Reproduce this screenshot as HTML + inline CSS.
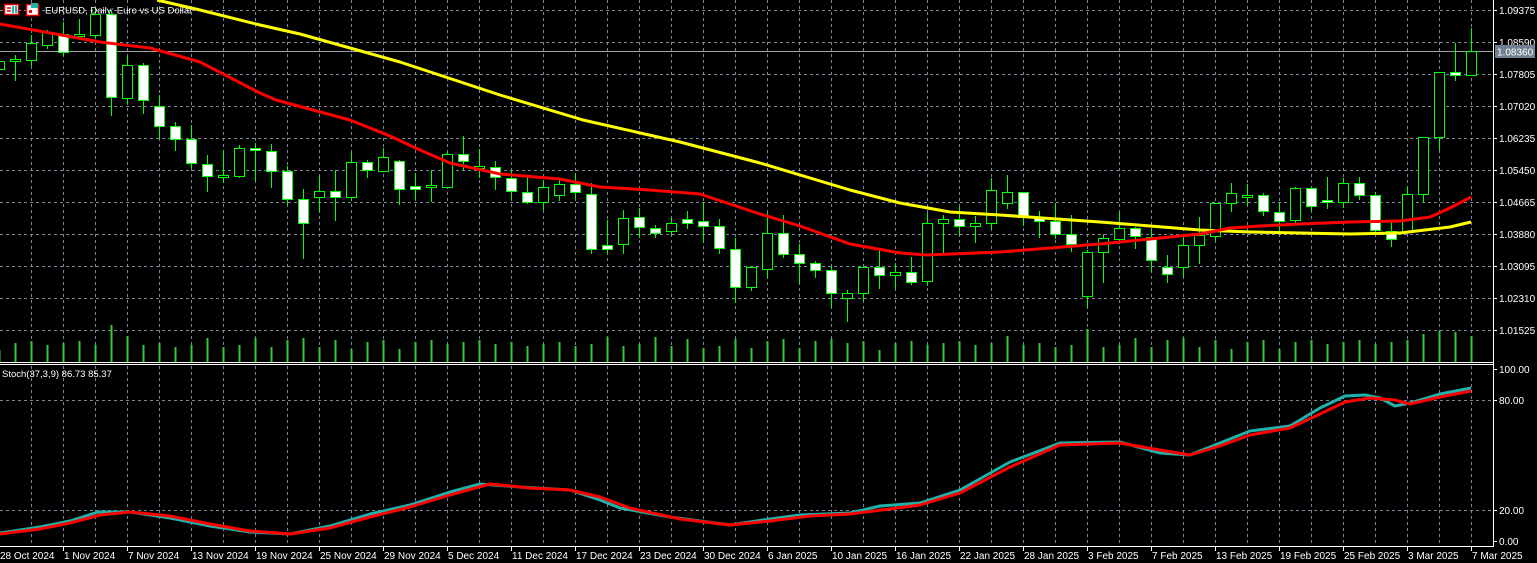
<!DOCTYPE html>
<html><head><meta charset="utf-8"><style>
html,body{margin:0;padding:0;background:#000;width:1537px;height:563px;overflow:hidden}
svg{display:block}
text{font-family:"Liberation Sans",sans-serif;font-size:10px;fill:#fff}
text.t{font-size:9.5px}
</style></head><body>
<svg id="s" width="1537" height="563" viewBox="0 0 1537 563" xmlns="http://www.w3.org/2000/svg">
<rect width="1537" height="563" fill="#000"/>
<g id="grid"></g>
<g id="vol"></g>
<line x1="0" y1="51.5" x2="1493" y2="51.5" stroke="#a0a0a0" stroke-width="1"/>
<g id="candles"></g>
<g id="lines"></g>
<line x1="0" y1="362.5" x2="1494" y2="362.5" stroke="#fff"/>
<line x1="0" y1="364.5" x2="1494" y2="364.5" stroke="#fff"/>
<line x1="1493.5" y1="0" x2="1493.5" y2="547" stroke="#fff"/>
<line x1="0" y1="546.5" x2="1494" y2="546.5" stroke="#fff"/>
<g id="labels"></g>
<rect x="1495" y="45" width="40" height="13" fill="#708090"/>
<text x="1497" y="55.5">1.08360</text>
<g>
<rect x="4.5" y="4.5" width="14" height="10" fill="#fff" stroke="#e00" stroke-width="1.5"/>
<line x1="7" y1="8" x2="11" y2="8" stroke="#e00" stroke-width="1.5"/><line x1="7" y1="11" x2="11" y2="11" stroke="#e00" stroke-width="1.5"/>
<line x1="13" y1="6" x2="13" y2="13" stroke="#20b2aa" stroke-width="2"/><line x1="16" y1="6" x2="16" y2="13" stroke="#20b2aa" stroke-width="2"/>
<rect x="26.5" y="4.5" width="12" height="11" fill="#fff" stroke="#e00" stroke-width="1.5"/>
<rect x="31" y="3" width="7" height="5" fill="#20b2aa"/>
<rect x="29" y="10" width="3" height="3" fill="#e00"/>
</g>
<text class="t" x="45" y="13.5">EURUSD, Daily:  Euro vs US Dollar</text>
<text class="t" x="2" y="377">Stoch(37,3,9) 86.73 85.37</text>
</svg>
<script>
var NS="http://www.w3.org/2000/svg";
function el(p,t,a,txt){var e=document.createElementNS(NS,t);for(var k in a)e.setAttribute(k,a[k]);if(txt!=null)e.textContent=txt;document.getElementById(p).appendChild(e);return e;}
for(var x=31;x<1493;x+=32){el("grid","line",{x1:x+.5,y1:0,x2:x+.5,y2:546,stroke:"#778899","stroke-dasharray":"3,3"});}
for(var y=10;y<=330;y+=32){el("grid","line",{x1:0,y1:y+.5,x2:1493,y2:y+.5,stroke:"#778899","stroke-dasharray":"3,3"});}
[400,510].forEach(function(y){el("grid","line",{x1:0,y1:y+.5,x2:1493,y2:y+.5,stroke:"#778899","stroke-dasharray":"3,3"});});
var C=[[-1,61,69,55,72,0],[15,59,61,55,80,0],[31,43,60,35,65,0],[47,32,45,30,48,0],[63,34,52,22,55,1],[79,34,35,19,38,0],[95,14,35,8,37,0],[111,14,97,10,115,1],[127,65,98,56,103,0],[143,65,100,63,113,1],[159,106,126,95,138,1],[175,126,139,122,150,1],[191,139,163,125,167,1],[207,164,176,155,191,1],[223,175,177,150,182,0],[239,148,176,145,177,0],[255,148,150,143,180,1],
[271,151,171,144,187,1],[287,171,199,166,204,1],[303,199,223,189,258,1],[319,191,197,176,211,0],[335,191,197,170,220,1],[351,162,197,153,200,0],[367,162,170,160,177,1],[383,157,171,148,171,0],[399,161,189,160,204,1],[415,186,189,173,199,1],[431,185,186,170,201,0],[447,154,187,152,187,0],[463,154,161,136,170,1],[479,166,167,149,177,0],[495,167,177,161,189,1],
[511,178,191,170,198,1],[527,192,202,177,203,1],[543,187,202,180,209,0],[559,184,195,178,200,0],[575,184,192,173,198,1],[591,194,249,183,253,1],[607,245,249,220,253,1],[623,218,244,210,253,0],[639,217,227,208,237,1],[655,228,233,225,237,1],[671,223,231,217,234,0],[687,219,223,211,228,1],[703,221,226,202,242,1],[719,226,248,219,253,1],[735,249,287,238,302,1],[751,267,287,266,290,0],
[767,233,269,213,277,0],[783,233,254,215,257,1],[799,254,263,244,283,1],[815,263,270,261,277,1],[831,270,293,266,307,1],[847,293,298,290,321,0],[863,267,293,267,300,0],[879,267,275,250,288,1],[895,272,275,263,288,0],[911,272,282,257,284,1],[927,223,281,213,285,0],[943,219,223,215,253,0],[959,219,226,207,234,1],[975,223,226,216,242,0],[991,190,223,178,228,0],[1007,192,203,175,208,0],
[1023,192,217,192,225,1],[1039,217,221,211,237,1],[1055,221,234,203,238,1],[1071,234,244,215,251,1],[1087,252,296,250,307,0],[1103,238,252,234,282,0],[1119,228,239,212,243,0],[1135,228,236,227,248,1],[1151,237,260,230,271,1],[1167,267,274,255,282,1],[1183,245,267,237,276,0],[1199,235,245,217,263,0],[1215,203,236,203,240,0],[1231,193,203,183,211,0],[1247,195,195,184,205,0],
[1263,195,211,193,215,1],[1279,212,221,203,230,1],[1295,188,220,187,223,0],[1311,188,206,187,210,1],[1327,200,202,177,208,1],[1343,183,202,178,207,0],[1359,183,195,177,199,1],[1375,195,230,192,232,1],[1391,231,239,222,246,1],[1407,194,232,186,232,0],[1423,137,194,137,201,0],[1439,72,137,72,149,0],[1455,72,75,43,80,1],[1471,51,75,28,75,0]];
var G="#00ff00";
C.forEach(function(c,i){
 el("candles","line",{x1:c[0]+.5,y1:c[3],x2:c[0]+.5,y2:c[4]+1,stroke:G});
 var h=Math.max(c[2]-c[1],2);
 el("candles","rect",{x:c[0]-4.5,y:c[1]+.5,width:10,height:h,fill:c[5]?"#fff":"#000",stroke:G});
 var vh=12+((i*37)%11)+((i*13)%5);
 if(c[0]==111)vh=37;if(c[0]==1087)vh=33;if(c[0]>=1407)vh=[22,28,31,30,26][(c[0]-1407)/16]||26;
 el("vol","line",{x1:c[0]+.5,y1:362-vh,x2:c[0]+.5,y2:362,stroke:"#32cd32","stroke-width":2});
});
function pl(pts,col){el("lines","polyline",{points:pts.map(function(p){return p.join(",")}).join(" "),fill:"none",stroke:col,"stroke-width":3,"stroke-linejoin":"round"});}
pl([[157,0],[200,10],[260,25],[300,34],[400,62],[500,95],[583,120],[680,142],[760,163],[850,190],[900,203],[950,212],[1000,215],[1100,222],[1150,226],[1200,230],[1250,232],[1300,233],[1350,234],[1400,233],[1450,227],[1471,222]],"#ffff00");
pl([[0,24],[50,33],[100,42],[150,48],[200,62],[260,93],[276,100],[350,120],[390,136],[420,150],[450,163],[500,174],[560,179],[600,187],[650,190],[700,194],[760,214],[800,226],[850,244],[900,253],[927,255],[1000,252],[1050,248],[1100,244],[1150,239],[1200,234],[1230,228],[1260,226],[1300,224],[1350,222],[1400,221],[1430,217],[1450,208],[1471,197]],"#ff0000");
pl([[0,533],[40,527],[70,521],[98,512],[130,512],[170,518],[210,526],[250,532],[290,534],[330,526],[370,514],[410,505],[450,492],[480,484],[520,487],[570,490],[600,500],[620,508],[670,517],[730,525],[770,519],[800,515],[850,513],[880,506],[920,503],[960,490],[1010,462],[1060,443],[1120,442],[1160,453],[1190,455],[1220,443],[1250,431],[1290,426],[1320,408],[1345,396],[1365,395],[1380,398],[1395,406],[1410,403],[1440,394],[1471,388]],"#20b2aa");
pl([[0,534],[40,529],[70,523],[100,515],[130,512],[170,516],[210,524],[250,531],[290,534],[330,528],[370,517],[410,507],[450,495],[490,484],[530,488],[570,490],[600,497],[630,508],[680,519],[730,525],[770,521],[810,516],[850,514],[890,509],[920,505],[960,493],[1010,467],[1060,445],[1120,443],[1160,450],[1190,455],[1220,446],[1250,435],[1290,428],[1320,414],[1345,402],[1370,398],[1395,400],[1410,404],[1440,397],[1471,391]],"#ff0000");
var P=["1.09375","1.08590","1.07805","1.07020","1.06235","1.05450","1.04665","1.03880","1.03095","1.02310","1.01525"];
P.forEach(function(p,i){var y=10+32*i;el("labels","line",{x1:1493,y1:y+.5,x2:1497,y2:y+.5,stroke:"#fff"});el("labels","text",{x:1499,y:y+4},p);});
[["100.00",369],["80.00",400],["20.00",510],["0.00",541]].forEach(function(a){el("labels","line",{x1:1493,y1:a[1]+.5,x2:1497,y2:a[1]+.5,stroke:"#fff"});el("labels","text",{x:1499,y:a[1]+4},a[0]);});
var D=["28 Oct 2024","1 Nov 2024","7 Nov 2024","13 Nov 2024","19 Nov 2024","25 Nov 2024","29 Nov 2024","5 Dec 2024","11 Dec 2024","17 Dec 2024","23 Dec 2024","30 Dec 2024","6 Jan 2025","10 Jan 2025","16 Jan 2025","22 Jan 2025","28 Jan 2025","3 Feb 2025","7 Feb 2025","13 Feb 2025","19 Feb 2025","25 Feb 2025","3 Mar 2025","7 Mar 2025"];
D.forEach(function(d,i){var x=-1+64*i;el("labels","line",{x1:x+.5,y1:546,x2:x+.5,y2:551,stroke:"#fff"});el("labels","text",{x:x+1,y:559},d);});
</script>
</body></html>
